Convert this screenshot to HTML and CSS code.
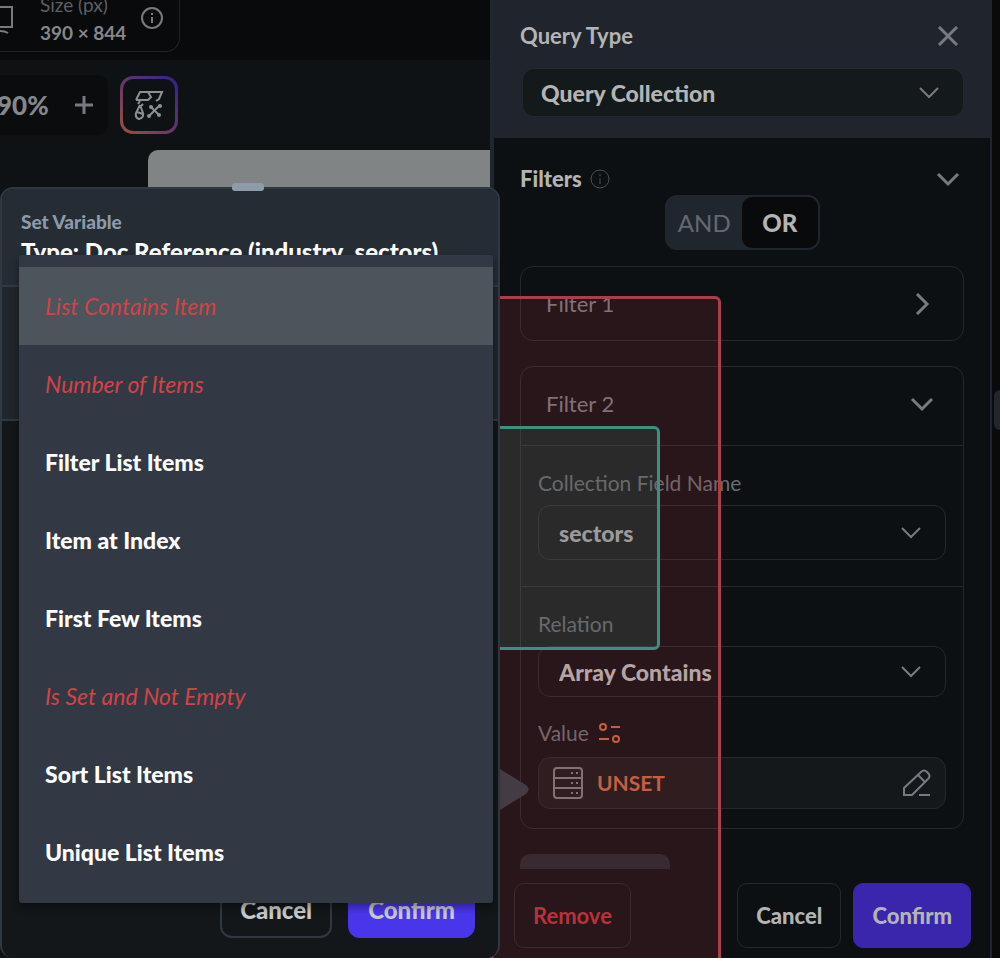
FILE: index.html
```
<!DOCTYPE html>
<html lang="en">
<head>
    <meta charset="utf-8">
    <title>Query Collection</title>
    <link rel="stylesheet" href="styles.css">
</head>
<body>
<div class="editor">
    <main class="canvas">
        <div class="device-bar">
            <div class="device">
                <svg class="monitor" width="14" height="32" viewBox="0 0 14 32"><path d="M0 3H12V23H0M0 27Q5 27 8 29"/></svg>
                <div class="size">
                    <span class="size-label">Size (px)</span>
                    <strong>390 × 844</strong>
                </div>
                <svg class="info" width="24" height="24" viewBox="0 0 24 24"><circle cx="12" cy="12" r="10"/><path d="M12 11V17M12 7V9"/></svg>
            </div>
        </div>
        <div class="tools">
            <div class="zoom">
                <span>90%</span>
                <button class="icon-button" aria-label="Zoom in">
                    <svg width="20" height="20" viewBox="0 0 20 20"><path d="M10 1V19M1 10H19"/></svg>
                </button>
            </div>
            <button class="theme" aria-label="Design tools">
                <svg width="30" height="30" viewBox="0 0 30 30">
                    <path d="M2 10L6 2H28L25 9L22 11M2 10H14L17 7L14 2M6 11L4 14M9 14L7 16M6 15L2 23Q1 28 5 29Q10 28 9 23L6 15M3 22L9 24M15 26L26 15"/>
                    <path d="M17 17L25 25"/>
                    <g class="dots"><circle cx="17" cy="17" r="2"/><circle cx="26" cy="16" r="2"/><circle cx="25" cy="25" r="2"/><circle cx="15" cy="26" r="2"/></g>
                </svg>
            </button>
        </div>
        <div class="artboard"></div>
    </main>

    <section class="query">
        <header class="query-head">
            <div class="row">
                <label class="title" for="query-type">Query Type</label>
                <button class="icon-button" aria-label="Close">
                    <svg width="20" height="20" viewBox="0 0 20 20"><path d="M1 1L19 19M19 1L1 19"/></svg>
                </button>
            </div>
            <div class="select dark">
                <select id="query-type"><option>Query Collection</option></select>
                <svg width="22" height="14" viewBox="0 0 22 14"><path d="M2 2L11 11L20 2"/></svg>
            </div>
        </header>

        <div class="query-body">
            <div class="row filters-head">
                <h2>Filters
                    <svg class="info small" width="20" height="20" viewBox="0 0 20 20"><circle cx="10" cy="10" r="9"/><path d="M10 9V15M10 5V7"/></svg>
                </h2>
                <button class="icon-button" aria-label="Collapse filters">
                    <svg width="24" height="16" viewBox="0 0 24 16"><path d="M2 3L12 13L22 3"/></svg>
                </button>
            </div>
            <div class="toggle">
                <button>AND</button>
                <button class="on">OR</button>
            </div>

            <div class="card">
                <div class="card-head">
                    <span>Filter 1</span>
                    <button class="icon-button" aria-label="Open filter 1">
                        <svg width="24" height="24" viewBox="0 0 24 24"><path d="M7 2L17 12L7 22"/></svg>
                    </button>
                </div>
            </div>

            <div class="card">
                <div class="card-head">
                    <span>Filter 2</span>
                    <button class="icon-button" aria-label="Close filter 2">
                        <svg width="24" height="16" viewBox="0 0 24 16"><path d="M2 3L12 13L22 3"/></svg>
                    </button>
                </div>
                <div class="field">
                    <label for="field-name">Collection Field Name</label>
                    <div class="select tall">
                        <select id="field-name"><option>sectors</option></select>
                        <svg width="22" height="14" viewBox="0 0 22 14"><path d="M2 2L11 11L20 2"/></svg>
                    </div>
                </div>
                <div class="field">
                    <label for="relation">Relation</label>
                    <div class="select">
                        <select id="relation"><option>Array Contains</option></select>
                        <svg width="22" height="14" viewBox="0 0 22 14"><path d="M2 2L11 11L20 2"/></svg>
                    </div>
                    <div class="value-label">
                        <span>Value</span>
                        <svg width="24" height="22" viewBox="0 0 24 22"><circle cx="5" cy="5" r="3"/><circle cx="18" cy="17" r="3"/><path d="M13 5H22M1 17H11"/></svg>
                    </div>
                    <button class="value">
                        <svg width="30" height="32" viewBox="0 0 30 32"><rect x="1" y="1" width="28" height="30" rx="3"/><path d="M1 11H29M1 21H29M18 6H20M23 6H25M18 16H20M23 16H25M18 26H20M23 26H25"/></svg>
                        <span>UNSET</span>
                        <svg class="pencil" width="28" height="28" viewBox="0 0 28 28"><path d="M1 26V19L18 3Q21 0 24 3L25 4Q28 7 25 10L9 26ZM15 6L22 13M16 26H27"/></svg>
                    </button>
                </div>
            </div>
            <div class="add-filter"></div>
        </div>

        <footer class="query-foot">
            <button class="btn remove">Remove</button>
            <button class="btn">Cancel</button>
            <button class="btn primary">Confirm</button>
        </footer>
    </section>
    <aside class="edge"><div class="notch"></div></aside>

    <!-- highlighted drop zones -->
    <div class="zone red"></div>
    <div class="zone teal"></div>
    <svg class="pointer" width="30" height="42" viewBox="0 0 30 42"><path d="M0 0L26 16Q31 20 26 25L0 41Z"/></svg>

    <section class="popup">
        <div class="handle"></div>
        <header class="popup-head">
            <p>Set Variable</p>
            <h1>Type: Doc Reference (industry_sectors)</h1>
        </header>
        <div class="popup-source"></div>
        <footer class="popup-foot">
            <button class="btn">Cancel</button>
            <button class="btn primary">Confirm</button>
        </footer>
        <ul class="menu">
            <li class="active"><button class="bad">List Contains Item</button></li>
            <li><button class="bad">Number of Items</button></li>
            <li><button>Filter List Items</button></li>
            <li><button>Item at Index</button></li>
            <li><button>First Few Items</button></li>
            <li><button class="bad">Is Set and Not Empty</button></li>
            <li><button>Sort List Items</button></li>
            <li><button>Unique List Items</button></li>
        </ul>
    </section>
</div>
</body>
</html>
```
FILE: styles.css
```
* {
    box-sizing: border-box;
}
body {
    margin: 0;
    background: #0f1215;
    color: #b4b4b5;
    font-family: Lato, "Liberation Sans", sans-serif;
    font-size: 22px;
    line-height: 28px;
}
button, select {
    margin: 0;
    padding: 0;
    border: 0;
    background: none;
    color: inherit;
    font: inherit;
}
svg {
    display: block;
    flex: none;
    fill: none;
    stroke: #777b80;
    stroke-width: 2;
}
h1, h2, p, ul {
    margin: 0;
    padding: 0;
}
.editor {
    position: relative;
    display: grid;
    grid-template-columns: 490fr 502fr 8fr;
    min-height: 100vh;
    overflow: hidden;
}

/* canvas behind the dialogs */
.canvas {
    min-width: 0;
}
.device-bar {
    height: 60px;
    background: #090a0c;
}
.device {
    display: flex;
    align-items: flex-start;
    width: 180px;
    height: 52px;
    padding-right: 15px;
    border: 1px solid #202326;
    border-width: 0 1px 1px 0;
    border-radius: 0 0 14px 0;
}
.monitor {
    margin: 4px 26px 0 0;
}
.size {
    flex: 1;
    align-self: flex-end;
    padding-bottom: 4px;
    color: #85878a;
    font-size: 19px;
    line-height: 28px;
    white-space: nowrap;
}
.size-label {
    display: block;
    color: #5c5f63;
}
.device .info {
    margin-top: 6px;
}
.tools {
    display: flex;
    align-items: center;
    gap: 12px;
    height: 90px;
}
.zoom {
    display: flex;
    align-items: center;
    justify-content: space-between;
    width: 108px;
    height: 60px;
    padding-right: 14px;
    border-radius: 0 10px 10px 0;
    background: #0a0c0e;
    color: #85878a;
    font-size: 26px;
    font-weight: 900;
}
.zoom span {
    margin-left: -3px;
}
.icon-button {
    display: flex;
}
.icon-button svg {
    stroke-width: 3;
}
.theme {
    display: grid;
    place-items: center;
    width: 58px;
    height: 58px;
    border: 3px solid transparent;
    border-radius: 13px;
    background: linear-gradient(#0f1215, #0f1215) padding-box, linear-gradient(45deg, #9a5040, #63376a 50%, #2f2290) border-box;
}
.theme svg {
    stroke: #8e8f91;
}
.dots {
    fill: #8e8f91;
    stroke: none;
}
.artboard {
    height: 60px;
    margin-left: 148px;
    border-radius: 10px 0 0 0;
    background: #808484;
}

/* query panel */
.query {
    display: flex;
    flex-direction: column;
    border: solid #20262d;
    border-width: 0 2px 0 4px;
    background: #0c1013;
}
.query-head {
    height: 138px;
    padding: 22px 26px 0;
    background: #20252d;
}
.row {
    display: flex;
    align-items: center;
    justify-content: space-between;
}
.query-head .row {
    padding-right: 6px;
}
.title {
    font-weight: 700;
}
.query-head .select {
    margin: 18px 0 0 2px;
}
.select {
    position: relative;
    display: flex;
    align-items: center;
    height: 51px;
    border: 1px solid #24282c;
    border-radius: 12px;
}
.select.dark {
    height: 49px;
    background: #14191b;
}
.select.tall {
    height: 55px;
}
.select select {
    width: 100%;
    height: 100%;
    padding: 0 60px 0 20px;
    appearance: none;
    font-size: 23px;
    font-weight: 900;
}
.select.dark select {
    padding-left: 18px;
}
.select svg {
    position: absolute;
    right: 23px;
    pointer-events: none;
}
.query-body {
    flex: 1;
    padding: 27px 26px 0;
}
.filters-head {
    padding-right: 4px;
}
h2 {
    display: flex;
    align-items: center;
    gap: 8px;
    font-size: 22px;
    font-weight: 900;
}
.info.small {
    stroke: #4b4f54;
    stroke-width: 1;
}
.toggle {
    display: flex;
    width: 155px;
    height: 55px;
    margin: 2px auto 16px;
    border: 2px solid #20262d;
    border-radius: 12px;
    background: #20262d;
    font-size: 24px;
}
.toggle button {
    flex: 1;
    color: #64696f;
}
.toggle .on {
    border-radius: 10px;
    background: #090a0c;
    color: #b4b4b5;
    font-weight: 900;
}
.card {
    margin-bottom: 25px;
    border: 1px solid #24282c;
    border-radius: 13px;
}
.card-head {
    display: flex;
    align-items: center;
    justify-content: space-between;
    height: 73px;
    padding: 0 29px 0 25px;
    color: #777b80;
}
.field {
    padding: 23px 17px 26px;
    border-top: 1px solid #24282c;
    color: #676c72;
    font-size: 21px;
}
.card-head + .field {
    margin-top: 5px;
}
.field + .field {
    padding-bottom: 19px;
}
.field label {
    display: block;
    margin-bottom: 8px;
}
.field select {
    color: #b4b4b5;
}
.value-label {
    display: flex;
    align-items: center;
    gap: 9px;
    margin: 22px 0 10px;
}
.value-label svg {
    stroke: #c26544;
}
.value {
    display: flex;
    align-items: center;
    gap: 14px;
    width: 100%;
    height: 52px;
    padding: 0 14px;
    border: 1px solid #24282c;
    border-radius: 12px;
    background: #14181b;
    color: #c26544;
    font-weight: 700;
}
.pencil {
    margin-left: auto;
}
.add-filter {
    width: 150px;
    height: 15px;
    border-radius: 10px 10px 0 0;
    background: #20262d;
}
.query-foot {
    display: flex;
    gap: 12px;
    padding: 13px 19px 10px 20px;
}
.btn {
    height: 65px;
    padding: 0 18px;
    border: 1px solid #24282c;
    border-radius: 10px;
    font-weight: 900;
}
.btn.primary {
    border-color: #3926ad;
    background: #3926ad;
}
.btn.remove {
    margin-right: auto;
    color: #b8303a;
    font-weight: 700;
}
.edge {
    padding-top: 390px;
    background: #080a0c;
}
.notch {
    height: 40px;
    margin-left: 2px;
    border-radius: 6px 0 0 6px;
    background: #20262d;
}

/* drop zones lie over the query panel */
.zone {
    position: absolute;
    left: 49%;
    border: 3px solid;
    pointer-events: none;
}
.zone.red {
    top: 296px;
    right: 279px;
    bottom: -10px;
    border-color: #a8404a;
    border-radius: 6px;
    background: rgba(200, 60, 70, .15);
}
.zone.teal {
    top: 426px;
    right: 340px;
    height: 224px;
    border-color: #3d8f83;
    border-radius: 6px;
    background: rgba(50, 123, 116, .2);
}
.pointer {
    position: absolute;
    top: 769px;
    left: 50%;
    fill: #453b44;
    stroke: none;
}

/* set variable popup */
.popup {
    position: absolute;
    top: 187px;
    bottom: 0;
    left: 0;
    display: flex;
    flex-direction: column;
    width: 50%;
    border: 2px solid #303943;
    border-bottom: 0;
    border-radius: 13px;
    background: #13171a;
}
.handle {
    position: absolute;
    top: -6px;
    left: 230px;
    width: 32px;
    height: 8px;
    border-radius: 3px;
    background: #8e9caa;
}
.popup-head {
    height: 98px;
    padding: 19px 19px 0;
    border-bottom: 2px solid #303943;
    border-radius: 11px 11px 0 0;
    background: #252c34;
    white-space: nowrap;
}
.popup-head p {
    color: #8e9aaa;
    font-size: 19px;
    font-weight: 900;
}
.popup-head h1 {
    color: #fff;
    font-size: 24px;
    font-weight: 900;
    line-height: 32px;
}
.popup-source {
    height: 134px;
    border-bottom: 2px solid #303943;
    background: #20262d;
}
.popup-foot {
    display: flex;
    justify-content: flex-end;
    gap: 16px;
    margin-top: auto;
    padding: 0 23px 20px;
}
.popup-foot .btn {
    height: 56px;
    border: 2px solid #303943;
    border-radius: 12px;
    color: #c9cacc;
    font-size: 24px;
}
.popup-foot .primary {
    border-color: #4936ea;
    background: #4936ea;
}
.menu {
    position: absolute;
    top: 66px;
    left: 17px;
    right: 5px;
    padding: 12px 0;
    border-radius: 3px;
    background: #323944;
    box-shadow: 0 4px 8px rgba(0, 0, 0, .4);
    font-size: 23px;
    list-style: none;
}
.menu button {
    display: block;
    width: 100%;
    height: 78px;
    padding: 0 26px;
    color: #fff;
    font-weight: 900;
    text-align: left;
}
.menu .active {
    background: #4c545c;
}
.menu .bad {
    color: #d14347;
    font-style: italic;
    font-weight: 400;
}
```
